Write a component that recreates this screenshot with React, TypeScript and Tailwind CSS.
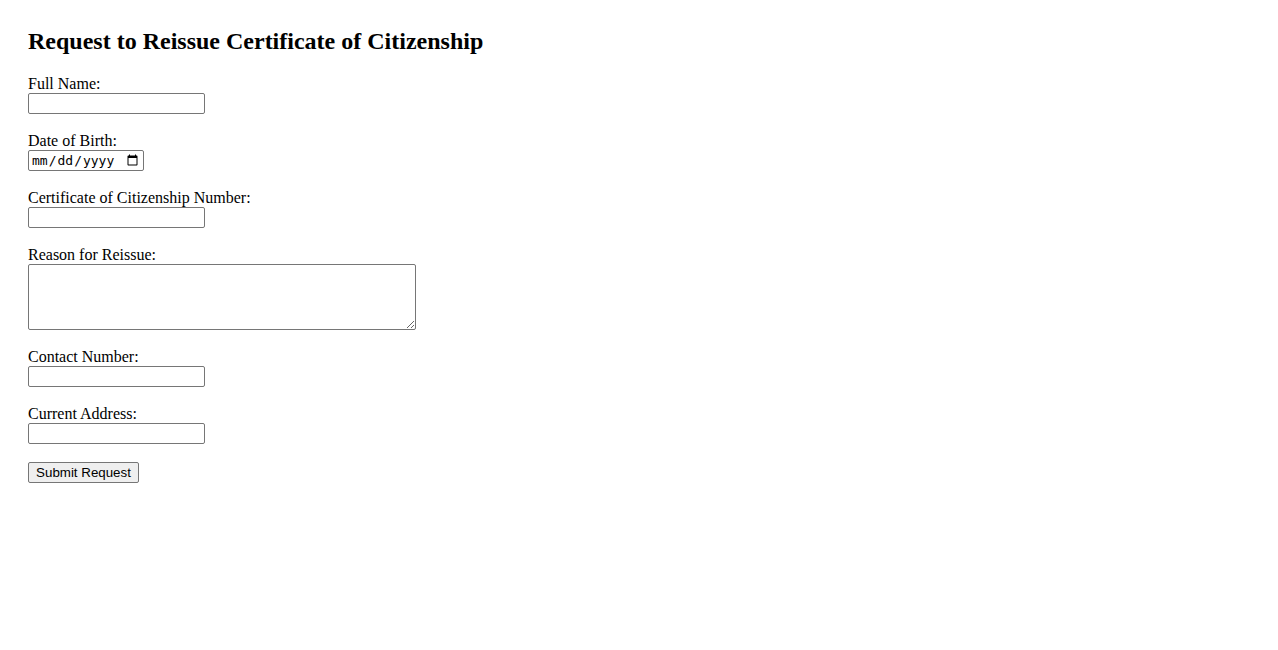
const inputCls =
  "block w-[177px] h-[21px] border border-[#767676] rounded-[2px] bg-white px-[2px] text-[13.33px] font-['Liberation_Sans',sans-serif]";

function Field({ label, children }: { label: string; children: React.ReactNode }) {
  return (
    <div className="mb-[18px]">
      <label className="block leading-[18px]">{label}</label>
      {children}
    </div>
  );
}

export default function App() {
  return (
    <div className="min-h-screen bg-white pt-[28px] pl-[28px] text-black text-[16px] font-['Liberation_Serif',serif]">
      <h2 className="text-[24px] font-bold leading-[27px] mb-[20px]">
        Request to Reissue Certificate of Citizenship
      </h2>
      <form onSubmit={(e) => e.preventDefault()}>
        <Field label="Full Name:">
          <input type="text" className={inputCls} />
        </Field>
        <Field label="Date of Birth:">
          <input
            type="date"
            className="block w-[116px] h-[21px] border border-[#767676] rounded-[2px] bg-white pl-[2px] pr-[2px] text-[13px] font-['DejaVu_Sans_Mono',monospace]"
          />
        </Field>
        <Field label="Certificate of Citizenship Number:">
          <input type="text" className={inputCls} />
        </Field>
        <Field label="Reason for Reissue:">
          <textarea className="block w-[388px] h-[66px] border border-[#767676] rounded-[2px] bg-white p-[2px] text-[13.33px] font-['DejaVu_Sans_Mono',monospace]" />
        </Field>
        <Field label="Contact Number:">
          <input type="text" className={inputCls} />
        </Field>
        <Field label="Current Address:">
          <input type="text" className={inputCls} />
        </Field>
        <button
          type="submit"
          className="block w-[111px] h-[21px] border border-[#767676] rounded-[2px] bg-[#efefef] text-[13.33px] leading-[19px] font-['Liberation_Sans',sans-serif]"
        >
          Submit Request
        </button>
      </form>
    </div>
  );
}
